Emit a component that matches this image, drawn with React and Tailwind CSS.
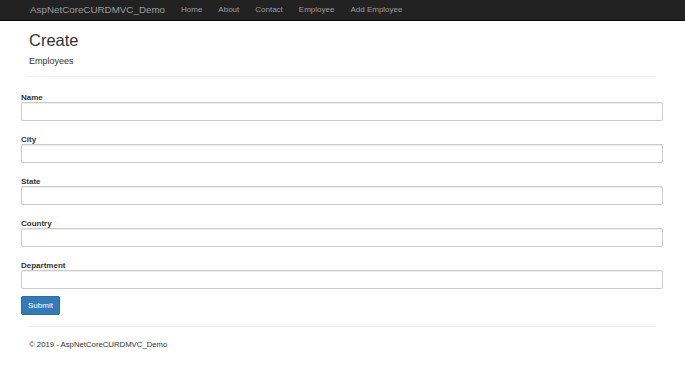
export default function App() {
  const fields = ['Name', 'City', 'State', 'Country', 'Department']
  const links = ['Home', 'About', 'Contact', 'Employee', 'Add Employee']

  return (
    <div className="min-h-[373px] bg-white text-[#333] font-['Liberation_Sans',Arial,sans-serif]">
      {/* Navbar */}
      <nav className="h-[21px] bg-[#222] border-b border-[#080808] flex items-center px-[30px]">
        <span className="text-[9.8px] leading-[20px] text-[#9d9d9d] mr-[8px]">AspNetCoreCURDMVC_Demo</span>
        <ul className="flex">
          {links.map((l) => (
            <li key={l} className="px-[8px] text-[8px] leading-[20px] text-[#9d9d9d]">
              {l}
            </li>
          ))}
        </ul>
      </nav>

      {/* Header */}
      <div className="px-[29px]">
        <h2 className="text-[16.5px] leading-[20px] mt-[9px]">Create</h2>
        <h4 className="text-[9px] leading-[12px] mt-[5px]">Employees</h4>
        <hr className="mt-[9px] border-t border-[#eee]" />
      </div>

      {/* Form */}
      <form className="pl-[21px] pr-[22px] pt-[17px]">
        {fields.map((f, i) => (
          <div key={f} className={i === fields.length - 1 ? 'mb-[7px]' : 'mb-[15px]'}>
            <label className="block text-[8px] leading-[8px] font-bold text-[#333]">{f}</label>
            <input
              type="text"
              className="block w-full h-[19px] border border-[#ccc] rounded-[2px] bg-white shadow-[inset_0_1px_1px_rgba(0,0,0,0.075)]"
            />
          </div>
        ))}
        <button
          type="button"
          className="block h-[19px] px-[6px] bg-[#337ab7] border border-[#2e6da4] rounded-[2px] text-white text-[8px] leading-[17px]"
        >
          Submit
        </button>
      </form>

      {/* Footer */}
      <div className="px-[29px]">
        <hr className="mt-[11px] border-t border-[#eee]" />
        <footer className="text-[7.75px] leading-[10px] mt-[13px] text-[#333]">© 2019 - AspNetCoreCURDMVC_Demo</footer>
      </div>
    </div>
  )
}
